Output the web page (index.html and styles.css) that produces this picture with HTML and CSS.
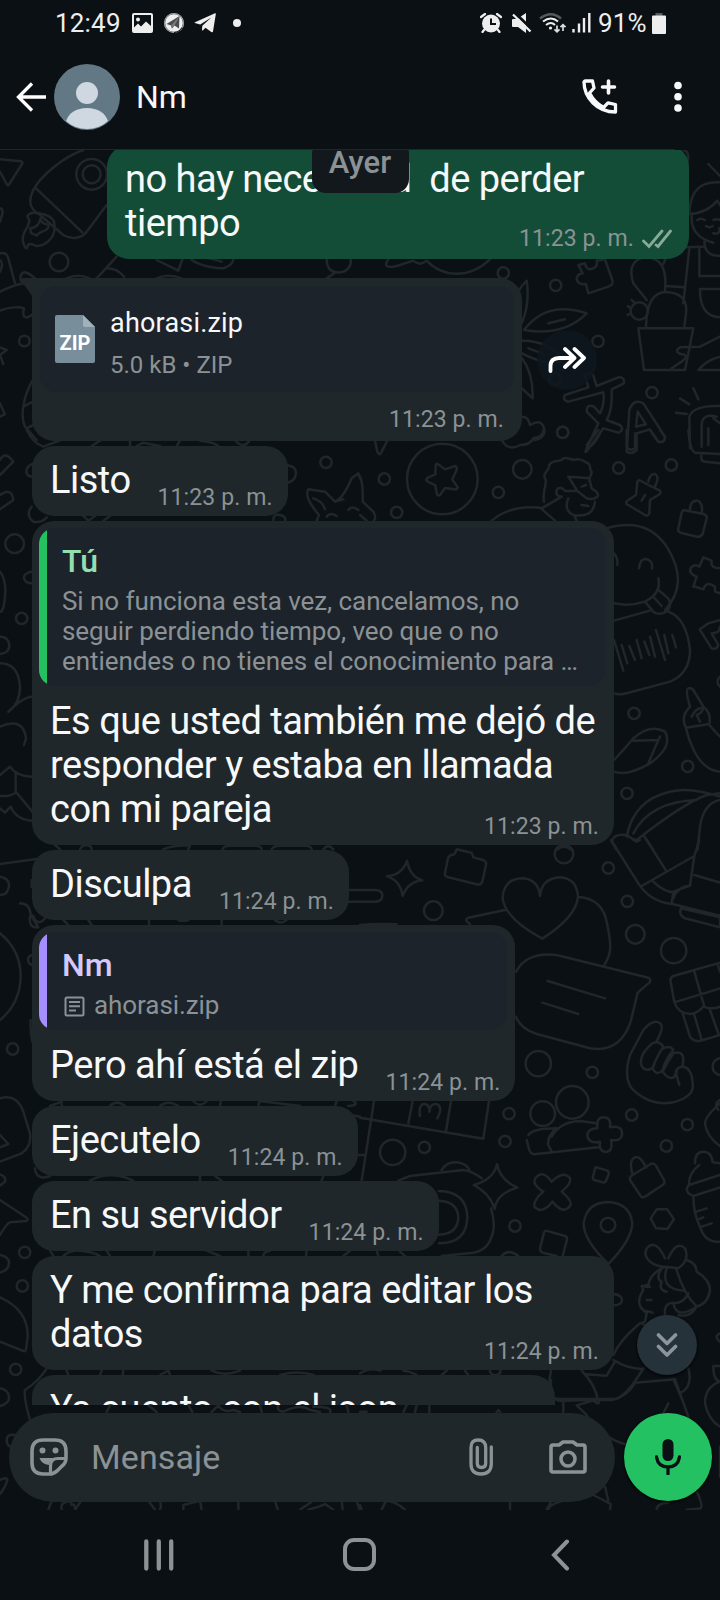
FILE: index.html
```
<!DOCTYPE html>
<html lang="es">

<head>
    <meta charset="UTF-8">
    <meta name="viewport" content="width=device-width, initial-scale=1.0">
    <title>Chat</title>
    <link rel="stylesheet" href="styles.css">
</head>

<body>
    <!-- Barra de estado -->
    <div class="status-bar">
        <span class="clock">12:49</span>
        <svg class="st-picture" width="21" height="20" viewBox="0 0 21 20"><path fill="#eee" fill-rule="evenodd" d="M2 0H19Q21 0 21 2V18Q21 20 19 20H2Q0 20 0 18V2Q0 0 2 0ZM2 2V14.5L6 10.5L9 13.5L14 8.5L19 13V2ZM6 4.5a2 2 0 1 1 0 4a2 2 0 1 1 0-4Z"/></svg>
        <svg class="st-round" width="22" height="22" viewBox="0 0 22 22"><circle cx="11" cy="11" r="10" fill="#eee"/><circle cx="11" cy="11" r="9.2" fill="none" stroke="#555" stroke-width=".8"/><path fill="#4a4d4f" d="M3.5 12L16.500 4L16 16.500L11.500 13.500L9 16.500L8 13.5Z"/><path fill="#777" d="M8 13.5L16.500 4L11.500 13.500L9 16.500Z"/><path d="M11 20.500a9.500 9.500 0 0 0 8-5" fill="none" stroke="#0b1014"/></svg>
        <svg class="st-plane" width="22" height="20" viewBox="0 0 22 20"><path fill="#eee" d="M1 9.3L21 .3Q22 0 21.8 1.2L19 18.5Q18.6 19.8 17.3 19L11.5 14.7L8.8 17.4Q8 17.6 8 16.5L8.3 12.7L17.3 4.6L6.2 11.5L.8 10.1Q0 9.8 1 9.3Z"/></svg>
        <svg class="st-dot" width="8" height="8" viewBox="0 0 8 8"><circle cx="4" cy="4" r="4" fill="#eee"/></svg>
        <div class="status-right">
            <svg width="22" height="20" viewBox="0 0 22 20"><circle cx="11" cy="10.5" r="9" fill="#eee"/><path d="M1 4L5 1M21 4L17 1M4 17L2.5 19M18 17L19.5 19" stroke="#eee" stroke-width="2.2" stroke-linecap="round"/><path d="M11 5.5V11H16" fill="none" stroke="#0b1014" stroke-width="2"/></svg>
            <svg class="st-mute" width="20" height="21" viewBox="0 0 20 21"><path fill="#eee" d="M1 6H5L14 0V20L6 14H1Q0 14 0 13V7Q0 6 1 6Z"/><path d="M3 0L20 16.500" stroke="#0b1014" stroke-width="3"/><path d="M1 1.500L18.500 18.500" stroke="#eee" stroke-width="2.400"/></svg>
            <svg class="st-wifi" width="28" height="21" viewBox="0 0 28 21" fill="none" stroke-width="2"><path d="M1 5.500Q12 -3 22 5.500" stroke="#555a5d" stroke-width="2.4"/><path d="M4 8.500Q12 2.500 19 8.500M7 12Q12 8 16 12" stroke="#eee"/><circle cx="11.500" cy="15" r="1.600" fill="#eee"/><path d="M18 12.500V18.500M15.500 16.300L18 18.800L20.500 16.300M24 18V12M21.500 14.200L24 11.700L26.500 14.200" stroke="#ddd" stroke-width="1.700"/></svg>
            <svg class="st-signal" width="19" height="20" viewBox="0 0 19 20"><path d="M1.500 16V19.500M7 10.500V19.500M12 5V19.500M17.300 0V19.500" stroke="#eee" stroke-width="2.400"/></svg>
            <span class="percent">91%</span>
            <svg class="st-battery" width="14" height="21" viewBox="0 0 14 21"><path fill="#55595c" d="M3.500 0H10.500V3H3.500Z"/><path fill="#eee" d="M1 2.500H13Q14 2.500 14 3.500V20Q14 21 13 21H1Q0 21 0 20V3.500Q0 2.500 1 2.500Z"/></svg>
        </div>
    </div>

    <!-- Encabezado del chat -->
    <div class="header">
        <svg class="back" width="30" height="30" viewBox="0 0 30 30" fill="none" stroke="#fff" stroke-width="3.300"><path d="M16 1.500L2.500 15L16 28.500M2.500 15H30"/></svg>
        <svg class="avatar" width="66" height="66" viewBox="0 0 66 66"><circle cx="33" cy="33" r="33" fill="#627884"/><circle cx="33" cy="29" r="11" fill="#cfd8e0"/><path fill="#cfd8e0" d="M12 57C15 49 22 44 33 44S51 49 54 57Q45 65 33 65T12 57Z"/></svg>
        <span class="contact">Nm</span>
        <svg class="call" width="36" height="36" viewBox="0 0 36 36" fill="none" stroke="#f7f8fa" stroke-width="3.300" stroke-linejoin="round"><path d="M3 2H10.500L12 9L7.500 14Q12.500 23.500 21.500 28.500L26 23.800L33.500 25.500V33Q20 33 11 24Q2 15 2 3Z"/><path d="M26.500 2V14M20.500 8H32.500" stroke-width="3.600" stroke-linecap="round"/></svg>
        <svg class="menu" width="8" height="32" viewBox="0 0 8 32" fill="#f7f8fa"><circle cx="4" cy="4.500" r="3.800"/><circle cx="4" cy="15.700" r="3.800"/><circle cx="4" cy="27" r="3.800"/></svg>
    </div>
    <div class="divider"></div>

    <div class="chat">
        <!-- Fondo con dibujos -->
        <svg class="wallpaper" viewBox="0 150 720 1360">
            <g transform="translate(0 140) scale(.33333)">
                <path d="M0 58L62 64Q70 66 66 72L28 132Q24 140 20 132L0 95M0 205Q12 208 6 225L0 245M0 340Q20 335 25 355L45 430M0 360Q12 370 0 395"/>
                <path d="M250 30C190 50 120 110 100 150C80 190 95 210 120 225L190 285C215 300 245 295 260 275L320 195M105 142L247 277"/>
                <circle cx="275" cy="103" r="46"/><circle cx="275" cy="103" r="27"/>
                <path d="M115 220C95 215 75 225 85 235C95 245 78 265 72 280C62 300 75 325 80 325C85 305 95 312 110 318C150 315 170 280 162 245C155 225 130 222 118 220M90 265C112 262 118 250 122 235C125 262 150 245 145 262C140 275 115 275 110 287C98 278 90 285 92 268"/>
                <circle cx="177" cy="366" r="28"/>
                <path d="M290 415L350 350M320 385C345 385 360 395 372 410M470 360L535 392L547 358M575 360C600 378 650 385 670 385C690 378 700 368 700 358M590 345L665 365M980 358C980 380 990 395 1010 397C1040 400 1055 380 1052 358M1005 398L980 415M200 415Q235 400 268 415M470 415Q505 400 545 415"/>
                <path d="M0 455C30 440 60 432 75 430C55 425 58 400 75 397Q88 400 105 415M0 512C30 500 60 500 72 505C65 530 75 540 95 525M0 622L20 630L0 645L10 672M97 722C70 770 60 830 75 860L110 900M70 800L95 787M85 862L100 855M0 790L14 823L0 830"/>
                <circle cx="73" cy="603" r="16"/>
            </g>
            <g transform="translate(360 140) scale(.33333)">
                <path d="M85 358C70 378 80 385 110 378L160 362Q180 380 200 362C250 415 330 415 390 358M970 30Q990 35 983 65M1045 72L1080 108"/>
                <circle cx="430" cy="399" r="17"/><circle cx="587" cy="436" r="17"/><circle cx="714" cy="604" r="17"/><circle cx="876" cy="758" r="17"/><circle cx="608" cy="877" r="17"/>
                <path d="M655 375L675 370Q680 395 700 385Q715 378 710 362L735 358L757 420Q762 435 745 440L685 460L678 432Q655 435 650 418Q650 402 668 400Z"/>
                <path d="M500 422Q440 480 486 548Q510 490 500 422ZM492 570Q560 480 680 520Q610 590 492 570ZM565 550L615 538M486 602Q560 600 615 660Q560 680 486 640M505 625L555 643M486 655Q520 700 518 775L486 745"/>
                <path d="M860 480L820 430C800 370 835 350 865 352C910 358 920 400 915 450M858 560Q860 455 920 456Q985 460 978 520L973 560M835 565H1000L975 690H852ZM915 360L910 372M915 438L975 442M988 325L970 490M975 322L1030 320M1018 322V408H1080M1020 447H1080M1020 450Q1020 530 1080 532"/>
                <circle cx="838" cy="513" r="26"/><path d="M826 490L815 480M812 505L803 498M812 520L803 525"/>
                <path d="M1080 127Q990 120 988 222Q1040 220 1072 182L1080 195M995 225Q990 290 1060 308M1033 305Q1035 350 1080 347M1012 240Q1022 232 1035 240M1060 240Q1070 235 1080 240M1038 258Q1048 265 1058 258M1060 280Q1080 285 1078 265M1080 590L1020 620L960 622Q940 635 965 643Q990 645 965 665L935 685M1080 650Q1040 660 1015 690H1080"/>
                <circle cx="585" cy="717" r="17"/>
                <path d="M675 705Q690 692 700 707L710 738L775 712Q795 710 792 730L755 748Q758 810 740 840L780 855Q795 870 775 878L730 865L690 920Q670 950 680 925L715 850L680 815Q680 790 702 800L720 820Q735 790 730 757L625 785Q605 780 615 765L685 742Z"/>
                <path d="M800 935L808 810Q820 775 850 790L915 890Q915 910 895 905L870 868L830 880V930Q815 945 800 935ZM828 860L858 853L833 815ZM990 925L988 830Q1000 795 1080 798M1025 920V850Q1030 820 1070 830M1060 835L1080 850M960 775L988 793M1000 745L1015 778M948 818L980 822M1045 865V915M486 830Q505 830 510 855Q545 835 552 865Q560 890 525 900"/>
            </g>
            <g transform="translate(0 430) scale(.33333)">
                <path d="M0 90Q15 60 40 95L0 135M0 195Q35 170 40 210L0 238M80 0Q100 40 130 50L210 20M390 32V48M410 48L430 38L480 48M540 32L530 48M600 32Q640 35 655 48M300 32L275 48M705 30Q730 60 750 30M100 100Q75 110 80 130Q85 140 100 140M860 105Q890 110 888 130Q885 155 860 158M95 230Q75 255 100 275Q125 280 140 262M820 270Q820 250 840 255Q860 260 855 272M250 258L265 272L285 258M310 272L330 258"/>
                <circle cx="978" cy="97" r="17"/><circle cx="44" cy="341" r="28"/><circle cx="65" cy="565" r="17"/>
                <path d="M95 425Q70 430 72 445Q75 460 97 460M0 425Q20 450 15 500T0 545M0 620Q25 620 28 645Q28 670 0 672M0 700Q55 700 60 770Q60 820 25 845Q70 800 97 800M0 890Q70 860 78 925L72 945M0 1035L30 1010Q50 1040 97 1040M47 1030V1085L97 1145M47 1088Q30 1100 0 1098M0 1135L15 1148L32 1130Q50 1170 97 1172"/>
                <path d="M950 272L957 255Q910 200 925 178L975 185L1005 215Q1030 205 1055 145L1075 130L1080 145M940 205Q970 215 975 238M980 260Q990 245 1010 258M1045 240Q1055 225 1075 240M1005 215L1030 208"/>
            </g>
            <g transform="translate(360 430) scale(.33333)">
                <circle cx="247" cy="147" r="106"/><path d="M233 102L255 118L285 108Q292 110 290 120L277 148L293 172Q292 180 283 178L255 174L240 195Q232 200 230 190L226 166L200 153Q197 146 205 142L226 133L227 105Q228 100 233 102Z"/>
                <circle cx="73" cy="147" r="17"/><circle cx="110" cy="247" r="17"/><circle cx="487" cy="118" r="28"/><circle cx="415" cy="187" r="17"/><circle cx="776" cy="114" r="17"/><circle cx="934" cy="105" r="17"/><circle cx="822" cy="850" r="17"/><circle cx="983" cy="1009" r="17"/><circle cx="801" cy="1090" r="17"/><circle cx="608" cy="7" r="17"/>
                <path d="M45 32L52 65Q60 80 65 65L82 32M0 140Q10 160 8 215L40 245Q50 262 42 272M0 255L20 272M425 30Q445 65 480 45Q510 45 520 25Q550 20 550 0M395 272Q450 225 540 233L585 272M545 235L605 200"/>
                <path d="M552 215C545 180 565 160 555 145C545 130 570 120 568 105C580 85 600 100 610 85C625 80 640 95 650 88C670 85 675 98 685 100C695 110 685 115 695 125C695 145 680 140 690 155L695 175Q720 190 712 200Q700 210 680 205L652 183L625 140Q645 140 690 145M652 183H615Q600 165 590 180Q585 200 605 200M625 205Q610 240 640 255Q700 265 705 215M665 225L685 228M645 262L650 272M665 170L678 165"/>
                <path d="M838 150L865 165L900 182Q905 190 895 195L870 210L868 250Q865 260 855 255L800 222Q795 215 805 210L828 195L832 155ZM865 155Q870 130 885 132Q900 140 885 170M845 212L855 195"/>
                <path d="M970 240L1030 252Q1042 255 1040 265L1028 312Q1022 322 1010 320L962 308Q952 305 955 295L965 248ZM990 240Q990 210 1012 212Q1030 218 1025 250M1025 70Q1020 95 1035 95L1080 100M985 0Q990 60 1005 68L1080 72M680 45L715 0M685 50Q700 50 720 10M800 0V50Q810 65 825 55V10M870 0L895 35Q915 40 915 20L900 0"/>
                <path d="M740 295Q860 260 920 350Q990 460 915 540M762 520Q810 530 855 515M762 370Q775 385 772 405M837 415Q840 385 857 387Q880 390 876 415M895 445Q905 490 855 515L880 545Q900 560 925 540Q935 520 925 505L893 478M878 498L905 528"/>
                <path d="M762 572L870 542M925 545Q980 565 990 660Q990 730 930 755L800 790Q780 795 762 790M762 630L790 722M785 645L802 700M808 648L825 690M830 630L845 685M853 635L868 675M870 620L885 680M888 600L915 690M913 615L925 670M937 615L948 652"/>
                <path d="M1000 470L1010 440Q985 430 992 415Q1000 400 1018 410L1030 382L1055 392Q1050 415 1080 415M1000 468L1030 478Q1040 450 1065 470L1065 485L1080 490M1020 598L1045 580L1080 570M1020 600L1055 655Q1070 660 1075 645L1055 610Q1080 610 1080 590M1080 740Q1065 755 1080 770"/>
                <path d="M985 775Q975 780 990 830Q960 860 978 893L1048 882Q1055 850 1030 830L1000 780Q992 772 985 775ZM995 860Q1010 830 1030 835Q1025 850 1010 855L1020 875M978 895Q1010 1020 1080 1025M1048 885Q1060 900 1080 920M762 990Q800 950 820 925Q870 880 915 905Q940 950 870 1000Q800 1040 762 1025M820 932L895 930L865 1000M895 930L900 920"/>
                <path d="M800 1220Q820 1110 930 1085Q990 1070 1080 1100M820 1210Q870 1115 1010 1110M830 1230Q970 1120 1040 1095L1080 1090M755 1235Q760 1210 800 1215Q820 1230 830 1230L850 1215L880 1260M1080 1110Q1030 1120 1020 1190L1012 1260M755 1235L770 1260M590 1260Q610 1240 635 1260"/>
            </g>
            <g transform="translate(0 840) scale(.33333)">
                <path d="M0 72L110 57M0 110Q28 115 27 137Q25 165 0 165M60 190Q90 190 92 225L115 262Q85 265 90 230Q100 220 105 240Q120 255 135 235M95 120V140M0 280Q62 330 62 410Q60 490 0 540M97 345Q80 350 85 365Q90 375 97 375M92 540Q90 570 97 605M0 775Q50 760 70 815L90 880Q95 920 65 940L0 965M0 885L25 912L0 922M0 1003Q20 1010 15 1025L0 1037M105 985Q105 1010 130 1013L150 1008"/>
                <circle cx="38" cy="627" r="17"/>
                <path d="M165 15L180 28M240 28Q245 15 260 15Q275 18 275 28M490 28Q520 15 570 17L565 28M668 28Q670 17 690 17H770Q785 20 785 28M815 28Q820 17 840 17H920Q935 20 935 28M970 28Q985 10 1000 28M1040 150H1080M1040 185H1080M190 240L205 255M265 240L275 255M447 240V255M535 240Q550 245 565 240M665 240V255M825 240Q840 255 860 240M150 798L185 785V798M330 798Q350 778 375 798M480 798Q505 778 535 798M580 783Q600 805 620 783M663 783L660 798M778 783L775 798M780 783L900 798M1010 783L1005 798M1060 783Q1080 795 1045 798M1055 825L1080 830M270 1022Q330 990 400 1022M600 1008V1022M645 1008L665 1022M970 1008L965 1022M1070 945H1080"/>
            </g>
            <g transform="translate(360 840) scale(.33333)">
                <circle cx="220" cy="212" r="28"/><circle cx="612" cy="42" r="28"/><circle cx="745" cy="84" r="17"/><circle cx="802" cy="184" r="17"/><circle cx="826" cy="283" r="28"/><circle cx="941" cy="332" r="38"/><circle cx="535" cy="671" r="38"/><circle cx="697" cy="697" r="17"/><circle cx="447" cy="821" r="17"/><circle cx="435" cy="904" r="17"/><circle cx="193" cy="922" r="17"/><circle cx="98" cy="937" r="38"/><circle cx="815" cy="825" r="17"/><circle cx="982" cy="854" r="17"/><circle cx="919" cy="918" r="17"/><circle cx="548" cy="821" r="37"/><circle cx="637" cy="787" r="49"/>
                <path d="M141 63Q150 110 187 121Q145 125 128 167Q120 120 81 109Q125 105 141 63ZM0 150H45Q67 150 67 167T45 185H0"/>
                <path d="M285 40L290 28L335 38L340 52L370 60Q380 65 378 75L367 125Q362 136 350 133L265 112Q253 108 255 98L264 55Q268 43 280 44Z"/>
                <path d="M540 168Q535 120 490 115Q430 115 428 175Q435 235 547 296Q650 230 654 170Q650 115 600 112Q545 115 540 168ZM435 210L325 233Q310 240 330 252M655 171Q730 175 742 255C755 320 755 340 732 376M468 395Q500 335 590 345L865 413Q875 418 868 428L833 458L812 545Q780 640 690 625L530 582Q480 565 468 530M563 423L735 475M547 488L655 522M0 255Q50 250 110 253"/>
                <path d="M753 0L835 130Q870 185 937 192L1080 227M860 0L920 95M845 138L1003 48L1018 0M1003 48L990 137L940 155L935 190M880 125Q910 155 940 157M990 137Q950 140 940 175M1003 105L1080 128M1080 262L975 235Q955 225 963 205L1080 232M1080 225V262M820 0L830 5L840 0"/>
                <path d="M1080 368L940 408Q930 412 932 425L943 487Q955 520 990 522Q1010 522 1030 500Q1055 510 1080 500M1003 395L1033 500M943 487L1080 445M968 520L990 590Q998 605 1020 603L1080 585M1003 525L1025 600M1050 510L1075 580M1072 370L1080 395"/>
                <path d="M850 570L810 645Q790 710 815 745Q870 800 940 787Q1005 770 998 730Q995 680 965 680Q945 685 948 700L958 735M850 570Q880 535 900 550Q915 560 888 607M888 607Q875 605 850 640Q835 670 850 685Q870 695 880 680Q885 660 910 620Q900 605 888 607M910 625Q930 615 940 630Q915 660 908 690Q890 710 878 685M940 640Q965 630 970 655L968 680M940 640Q920 670 908 695Q925 720 942 712L950 695"/>
                <path d="M1080 655Q1058 660 1058 680T1080 705M1080 780Q1060 790 1075 810M1080 790Q1035 830 1035 850Q1040 890 1080 918M505 885Q520 865 590 865M575 890Q600 845 660 843L708 850M590 865Q560 890 565 915L575 935M500 900L508 930Q512 945 530 942L715 922"/>
                <path d="M712 862Q710 830 730 832Q755 832 750 862Q788 855 786 882Q785 905 753 900Q760 935 738 936Q715 935 720 905Q685 912 682 887Q682 865 712 865Z"/>
                <path d="M0 833L370 896L387 783M42 783L5 1022M158 783L145 850M273 783L258 873M180 828Q175 790 195 792Q210 795 208 815Q210 790 230 792Q250 800 232 835M0 945H12M115 1022L150 1008L310 990Q340 995 365 1015M245 990Q260 965 290 967Q320 970 328 990"/>
                <path d="M411 973Q420 1020 472 1043Q410 1060 404 1107Q390 1060 341 1035Q400 1020 411 973ZM530 1010Q550 990 575 1025Q610 990 630 1015Q635 1030 605 1055Q640 1085 630 1098Q610 1125 577 1085Q545 1125 523 1100Q520 1080 550 1055Q510 1030 530 1010ZM710 982L742 992Q748 996 746 1002L738 1023Q735 1028 728 1027L702 1020Q697 1016 699 1010L705 986Q706 981 710 982Z"/>
                <path d="M818 1005L872 972Q882 968 888 977L912 1020Q916 1030 908 1035L855 1070Q845 1075 840 1065L810 1020Q808 1010 818 1005ZM818 1005Q805 960 825 952Q840 945 858 982M1005 970Q1005 935 1030 935Q1055 935 1058 967L1080 970M1018 975Q985 1000 987 1035L1080 1005M987 1035Q975 1045 985 1060L1000 1068L1080 1042M1000 1068Q1000 1120 1020 1160Q1035 1210 1080 1205M1010 1115L1040 1105M1018 1137L1030 1132M1025 1160L1055 1150"/>
            </g>
            <g transform="translate(360 1160) scale(.33333)">
                <path d="M393 145Q405 190 400 210Q390 270 340 278L245 288M237 93Q320 95 322 172Q320 250 237 250M237 122Q293 125 295 172Q293 222 237 224M120 275L135 288M50 272L55 288M425 288Q445 265 475 288"/>
                <circle cx="465" cy="198" r="17"/><circle cx="744" cy="195" r="22"/>
                <path d="M745 312Q670 240 671 190Q680 127 745 126Q810 130 817 190Q815 240 745 312ZM558 212L615 228Q622 230 621 238L608 288M558 212Q554 212 552 218L540 265Q540 275 548 278L590 288M890 148L922 148L942 178L922 207L888 205L872 175Z"/>
                <path d="M762 402Q785 405 786 420Q785 435 762 436M915 295Q890 240 865 260Q845 280 870 305Q890 320 915 320L955 325Q990 300 975 265Q950 240 925 295M915 320Q870 340 865 375L845 378L850 390Q825 430 850 450L860 460L855 485L840 490Q780 540 760 585M905 325Q885 355 905 365Q895 390 920 395M920 325Q900 390 975 392M948 325Q970 400 1010 440Q950 480 940 430Q970 430 985 400M980 300Q1010 310 1010 335Q1050 360 1050 390Q1045 430 1010 440Q990 475 955 465M855 380H870M860 420H875M860 453L878 458M915 465Q910 430 940 428"/>
                <path d="M760 600Q800 625 845 627M845 490L855 497M765 605L740 647L678 643M850 625Q805 700 770 717H600M665 632Q710 680 713 720M573 632Q560 690 580 715L600 717M825 668L945 658L985 770M940 658L965 715M1080 520Q1060 530 1080 545M1060 620Q1060 660 1080 665M1060 618H1080M1080 665Q1035 680 1035 730Q1045 780 1080 800M985 625Q1000 680 960 700M0 640Q30 620 60 632M130 632Q155 635 170 645M260 632L245 645M315 632L325 645M390 632Q390 645 410 645Q425 640 420 632"/>
            </g>
            <g transform="translate(0 1160) scale(.33333)">
                <path d="M0 120L78 172Q88 180 78 183L30 187Q20 190 0 225M0 285Q28 290 27 310T0 338M0 412Q85 450 83 530L78 568Q78 575 70 573L0 545M0 685Q25 690 27 710T0 738M140 625Q120 660 75 690Q70 710 90 780M150 272L160 288M190 288Q210 270 240 272Q280 275 300 288M320 272L330 288M465 272L460 288M620 272L660 288M745 272V288M790 288Q790 275 810 272M920 272L918 288M1030 288L1050 272M200 632L205 645M305 632L300 645M370 632L368 645M480 645L505 632L510 645M635 632Q675 650 720 632M840 645Q890 630 940 645"/>
                <circle cx="74" cy="277" r="17"/><circle cx="67" cy="378" r="17"/><circle cx="47" cy="628" r="17"/>
            </g>
            <g transform="translate(0 1380) scale(.33333)">
                <path d="M45 165Q20 160 20 182Q22 200 35 200M0 300Q20 290 22 300Q15 325 0 342M145 389L155 362M185 389Q180 370 200 365Q215 362 215 375Q225 370 225 385M225 389L242 365M445 362L465 389M480 362Q485 380 480 389M550 389V375L600 362L605 389M715 362V389M825 362L833 389M900 389L935 365M925 389Q960 380 975 372L1000 389M1025 362L1028 389M1070 362L1078 389"/>
                <path d="M320 96L330 76M445 76L470 96M565 76L577 96M635 96L655 76Q670 100 700 90L720 96M780 76L785 96M835 76Q830 95 850 95Q900 70 930 90L960 96M940 80Q1000 80 990 96M1040 76L1045 96"/>
            </g>
            <g transform="translate(360 1380) scale(.33333)">
                <path d="M0 95H20M140 76L130 96M170 76L165 96M208 76V96M410 96L415 90L420 96M610 65V96M573 0Q570 60 600 62L700 60Q740 60 755 60Q800 50 825 10M650 76L700 62Q720 80 715 60M650 76L675 100Q735 180 795 192M925 70L910 100M735 320L745 362M700 345L752 372L750 389M890 389Q890 370 925 368M1010 335Q1030 375 1022 385Q1000 389 980 389M450 362V389M65 389L78 362Q110 365 135 389M0 375L5 389M565 389Q565 375 610 362M575 362L560 389M1080 200V290"/>
            </g>
        </svg>

        <div class="screen">
            <!-- Mensajes -->
            <div class="messages">
                <div class="bubble out stacked">
                    <p class="text">no hay necesidad  de perder<br>tiempo</p>
                    <span class="time">11:23 p. m. <svg class="checks" width="30" height="20" viewBox="0 0 30 20" fill="none" stroke="#86ab99" stroke-width="2.800" stroke-linecap="round"><path d="M1.500 12L7 17.500L20 2M14 16L16 17.500L28.500 2"/></svg></span>
                </div>

                <div class="file-row">
                    <svg class="tail" width="11" height="24" viewBox="0 0 11 24"><path fill="#1f272a" d="M11 0H2Q-1 1 1 4L11 18Z"/></svg>
                    <div class="bubble file-bubble">
                        <div class="file">
                            <div class="zip-icon">
                                <svg width="40" height="48" viewBox="0 0 40 48"><path fill="#788f9b" d="M2 0H28L40 12V46Q40 48 38 48H2Q0 48 0 46V2Q0 0 2 0Z"/><path fill="#a2b2ba" d="M28 0L40 12H30Q28 12 28 10Z"/><text x="20" y="35" class="zip-label">ZIP</text></svg>
                            </div>
                            <div class="file-data">
                                <div class="file-name">ahorasi.zip</div>
                                <div class="file-info">5.0 kB • ZIP</div>
                            </div>
                        </div>
                        <span class="time">11:23 p. m.</span>
                    </div>
                    <div class="forward">
                        <svg width="38" height="28" viewBox="0 0 38 28" fill="none" stroke="#fff" stroke-width="3.800" stroke-linecap="round" stroke-linejoin="round"><path d="M2.500 25V20Q2.500 12 11 12H25M17 3L26.500 12L17 21M26.500 3L36 12L26.500 21"/></svg>
                    </div>
                </div>

                <div class="bubble short">
                    <p class="text">Listo</p>
                    <span class="time">11:23 p. m.</span>
                </div>

                <div class="bubble stacked wide">
                    <div class="quote quote-me">
                        <div class="quote-name">Tú</div>
                        <div class="quote-text">Si no funciona esta vez, cancelamos, no<br>seguir perdiendo tiempo, veo que o no<br>entiendes o no tienes el conocimiento para …</div>
                    </div>
                    <p class="text">Es que usted también me dejó de<br>responder y estaba en llamada<br>con mi pareja</p>
                    <span class="time">11:23 p. m.</span>
                </div>

                <div class="bubble short">
                    <p class="text">Disculpa</p>
                    <span class="time">11:24 p. m.</span>
                </div>

                <div class="bubble">
                    <div class="quote quote-contact">
                        <div class="quote-name">Nm</div>
                        <div class="quote-text"><svg class="doc" width="21" height="21" viewBox="0 0 21 21" fill="none" stroke="#8b9296" stroke-width="2"><rect x="1.500" y="1.500" width="18" height="18" rx="1.500"/><path d="M5 6H16M5 10.300H16M5 14.600H12"/></svg>ahorasi.zip</div>
                    </div>
                    <div class="short">
                        <p class="text">Pero ahí está el zip</p>
                        <span class="time">11:24 p. m.</span>
                    </div>
                </div>

                <div class="bubble short">
                    <p class="text">Ejecutelo</p>
                    <span class="time">11:24 p. m.</span>
                </div>

                <div class="bubble short">
                    <p class="text">En su servidor</p>
                    <span class="time">11:24 p. m.</span>
                </div>

                <div class="bubble stacked wide">
                    <p class="text">Y me confirma para editar los<br>datos</p>
                    <span class="time">11:24 p. m.</span>
                </div>

                <div class="bubble short">
                    <p class="text">Ya cuento con el json</p>
                    <span class="time">11:24 p. m.</span>
                </div>

                <div class="date">Ayer</div>
                <div class="scroll-down">
                    <svg width="22" height="26" viewBox="0 0 22 26" fill="none" stroke="#8b959b" stroke-width="3.600" stroke-linecap="round" stroke-linejoin="round"><path d="M2.500 3L11 11.500L19.500 3M2.500 14.500L11 23L19.500 14.500"/></svg>
                </div>
            </div>

            <!-- Caja de mensaje -->
            <div class="composer">
                <div class="input">
                    <svg width="38" height="38" viewBox="0 0 38 38" fill="none" stroke="#8b9296" stroke-width="3.600" stroke-linejoin="round"><path d="M13 2H25Q36 2 36 13V20Q36 25 32 28L27 33Q23 36 20 36H13Q2 36 2 25V13Q2 2 13 2Z"/><path d="M20.500 35V28Q20.500 20.500 28 20.500H35.500" stroke-width="3.200"/><g fill="#8b9296" stroke="none"><circle cx="12.500" cy="12.500" r="3"/><circle cx="25.500" cy="12.500" r="3"/><path d="M9.500 20H25Q19.500 22 19 27Q11.500 26 9.500 20Z"/></g></svg>
                    <span class="placeholder">Mensaje</span>
                    <svg class="clip" width="24" height="38" viewBox="0 0 24 38" fill="none" stroke="#8b9296" stroke-width="3.300"><path stroke-linecap="round" d="M22.300 9V26Q22 36 12 36Q2 36 2 26V9.500Q2 2 9.300 2Q16.700 2 16.700 9.500V25.500Q16.700 29.500 12.500 29.500Q8.300 29.500 8.300 25.500V9.500"/></svg>
                    <svg width="38" height="34" viewBox="0 0 38 34" fill="none" stroke="#8b9296" stroke-width="3.600" stroke-linejoin="round"><path d="M4 5H10L14 2H24L28 5H34Q36 5 36 7V30Q36 32 34 32H4Q2 32 2 30V7Q2 5 4 5Z"/><circle cx="19" cy="19" r="7"/></svg>
                </div>
                <div class="mic">
                    <svg width="26" height="36" viewBox="0 0 26 36"><rect x="7.500" y="0" width="11" height="22" rx="5.500" fill="#0b1014"/><path d="M1.500 18Q3 28 13 28T24.500 18M13 28V35" fill="none" stroke="#0b1014" stroke-width="3.300" stroke-linecap="round"/></svg>
                </div>
            </div>
        </div>
    </div>

    <!-- Barra de navegación -->
    <div class="nav-bar">
        <svg width="30" height="32" viewBox="0 0 30 32" stroke="#8d9295" stroke-width="4.300" stroke-linecap="round"><path d="M2.300 2.500V29.500M14.800 2.500V29.500M27.200 2.500V29.500"/></svg>
        <svg class="home" width="33" height="33" viewBox="0 0 33 33" fill="none" stroke="#8d9295" stroke-width="4"><rect x="2" y="2" width="29" height="29" rx="9"/></svg>
        <svg width="19" height="32" viewBox="0 0 19 32" fill="none" stroke="#8d9295" stroke-width="4" stroke-linecap="round"><path d="M16 2.500L3 16L16 29.500"/></svg>
    </div>
</body>

</html>
```
FILE: styles.css
```
* {
    box-sizing: border-box;
}

body {
    margin: 0;
    width: 720px;
    height: 1600px;
    overflow: hidden;
    background-color: #0b1014;
    font-family: Roboto, sans-serif;
    color: #f7f8fa;
}

svg {
    display: block;
    flex: none;
}

/* Barra de estado */
.status-bar {
    display: flex;
    align-items: center;
    height: 46px;
    padding: 0 54px 0 55px;
    font-size: 26px;
    line-height: 30px;
    color: #eee;
}

.clock {
    width: 77px;
    letter-spacing: 0.2px;
}

.st-round {
    margin-left: 10px;
}

.st-plane {
    margin-left: 9px;
}

.st-dot {
    margin-left: 17px;
}

.status-right {
    display: flex;
    align-items: center;
    margin-left: auto;
}

.st-mute {
    margin-left: 10px;
}

.st-wifi {
    margin-left: 7px;
}

.st-signal {
    margin-left: 5px;
}

.percent {
    width: 53px;
    margin-left: 7px;
    letter-spacing: 0.2px;
}

.st-battery {
    margin-left: 1px;
}

/* Encabezado */
.header {
    display: flex;
    align-items: center;
    height: 103px;
    padding: 0 38px 2px 16px;
}

.avatar {
    margin-left: 8px;
}

.contact {
    flex: 1;
    margin-left: 16px;
    font-size: 32px;
    line-height: 38px;
}

.menu {
    margin-left: 56px;
}

.divider {
    width: 675px;
    height: 1px;
    background-color: #20272b;
}

/* Zona del chat */
.chat {
    display: grid;
    height: 1360px;
}

.wallpaper,
.screen {
    grid-area: 1 / 1;
}

.wallpaper {
    width: 720px;
    height: 1360px;
    fill: none;
    stroke: #20262a;
    stroke-width: 7.5;
    stroke-linecap: round;
    stroke-linejoin: round;
}

.screen {
    z-index: 1;
    height: 1360px;
}

.messages {
    position: relative;
    display: flex;
    flex-direction: column;
    align-items: flex-start;
    gap: 5px;
    height: 1255px;
    padding-left: 32px;
    overflow: hidden;
}

.bubble {
    flex: none;
    border-radius: 22px;
    background-color: #1f272a;
}

.text {
    margin: 0;
    font-size: 38px;
    line-height: 44px;
    letter-spacing: -0.5px;
    white-space: pre;
}

.time {
    font-size: 23px;
    line-height: 26px;
    letter-spacing: 0.1px;
    color: #8b9296;
    white-space: nowrap;
}

.short {
    display: flex;
    align-items: flex-end;
    gap: 27px;
    padding: 12px 15px 5px 18px;
}

.short .text {
    padding-bottom: 9px;
}

.stacked .text {
    padding: 12px 0 0 18px;
}

.stacked .time {
    display: flex;
    justify-content: flex-end;
    height: 26px;
    margin: -17px 15px 5px 0;
}

.wide {
    width: 582px;
}

.out {
    width: 582px;
    margin: -5px 0 14px 75px;
    background-color: #144d37;
}

.out .time {
    margin: -19px 17px 7px 0;
}

.checks {
    margin-left: 8px;
    margin-top: 3px;
}

/* Archivo adjunto */
.file-row {
    display: flex;
    align-items: center;
    margin-left: -11px;
}

.tail {
    align-self: flex-start;
}

.file-bubble {
    display: flex;
    flex-direction: column;
    width: 490px;
    height: 163px;
    padding: 8px;
    border-top-left-radius: 0;
}

.file {
    display: flex;
    align-items: center;
    height: 108px;
    padding-left: 15px;
    border-radius: 16px;
    background-color: #1d232a;
}

.zip-icon {
    margin-right: 15px;
}

.zip-label {
    fill: #fff;
    font-size: 20px;
    font-weight: 700;
    text-anchor: middle;
}

.file-data {
    padding-top: 7px;
}

.file-name {
    margin-bottom: 12px;
    font-size: 27px;
    line-height: 32px;
    letter-spacing: 0.2px;
}

.file-info {
    font-size: 24px;
    line-height: 28px;
    color: #8b9296;
}

.file-bubble .time {
    margin: 15px 10px 0 0;
    text-align: right;
}

.forward {
    display: flex;
    align-items: center;
    justify-content: center;
    width: 60px;
    height: 60px;
    margin-left: 15px;
    border-radius: 50%;
    background-color: rgba(14, 23, 29, 0.85);
}

/* Mensaje citado */
.quote {
    margin: 7px 8px 1px 7px;
    padding: 14px 0 0 23px;
    border-radius: 16px;
}

.quote-me {
    height: 158px;
    background: linear-gradient(90deg, #24c163 8px, #1d232a 8px);
}

.quote-contact {
    height: 98px;
    background: linear-gradient(90deg, #a58fff 8px, #1d232a 8px);
}

.quote-name {
    font-size: 32px;
    font-weight: 500;
    line-height: 38px;
}

.quote-me .quote-name {
    color: #93dfb0;
}

.quote-contact .quote-name {
    color: #d4c9ff;
}

.quote-text {
    display: flow-root;
    margin-top: 6px;
    font-size: 26px;
    line-height: 30px;
    letter-spacing: -0.07px;
    color: #8b9296;
    white-space: nowrap;
}

.doc {
    float: left;
    margin: 6px 9px 0 2px;
}

/* Fecha flotante */
.date {
    position: absolute;
    top: -10px;
    left: 312px;
    width: 97px;
    height: 53px;
    padding-right: 1px;
    border-radius: 14px;
    background-color: #12181c;
    color: #8b9296;
    font-size: 31px;
    font-weight: 500;
    line-height: 45px;
    text-align: center;
}

.scroll-down {
    position: absolute;
    top: 1165px;
    left: 637px;
    display: flex;
    align-items: center;
    justify-content: center;
    width: 60px;
    height: 60px;
    border-radius: 50%;
    background-color: #26323a;
    box-shadow: 0 1px 3px #000;
}

/* Caja de mensaje */
.composer {
    display: flex;
    align-items: center;
    gap: 9px;
    height: 105px;
    padding: 0 8px 1px 9px;
}

.input {
    display: flex;
    align-items: center;
    width: 606px;
    height: 89px;
    padding: 0 28px 0 21px;
    border-radius: 45px;
    background-color: #1f272a;
}

.placeholder {
    flex: 1;
    margin-left: 23px;
    font-size: 34px;
    letter-spacing: 0.1px;
    color: #8b9296;
}

.clip {
    margin-right: 56px;
}

.mic {
    display: flex;
    align-items: center;
    justify-content: center;
    width: 88px;
    height: 88px;
    border-radius: 50%;
    background-color: #24c163;
    box-shadow: 0 1px 3px #000;
}

/* Barra de navegación */
.nav-bar {
    display: flex;
    align-items: center;
    justify-content: space-between;
    height: 89px;
    padding: 0 150px 0 144px;
}

.home {
    margin-right: 6px;
}
```
